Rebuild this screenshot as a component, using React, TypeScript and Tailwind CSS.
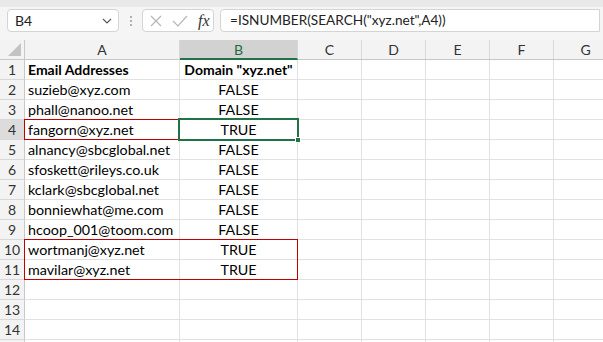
import React from "react";

const cols = ["A", "B", "C", "D", "E", "F", "G"];
const colW = [155, 118, 64, 64, 64, 64, 64];
const rows: [string, string][] = [
  ["Email Addresses", 'Domain "xyz.net"'],
  ["suzieb@xyz.com", "FALSE"],
  ["phall@nanoo.net", "FALSE"],
  ["fangorn@xyz.net", "TRUE"],
  ["alnancy@sbcglobal.net", "FALSE"],
  ["sfoskett@rileys.co.uk", "FALSE"],
  ["kclark@sbcglobal.net", "FALSE"],
  ["bonniewhat@me.com", "FALSE"],
  ["hcoop_001@toom.com", "FALSE"],
  ["wortmanj@xyz.net", "TRUE"],
  ["mavilar@xyz.net", "TRUE"],
  ["", ""],
  ["", ""],
  ["", ""],
  ["", ""],
];

export default function App() {
  const font = { fontFamily: "Lato, 'Open Sans', sans-serif" };
  return (
    <div className="w-[603px] h-[342px] overflow-hidden bg-white relative" style={font}>
      {/* formula bar */}
      <div className="h-[40px] bg-[#f5f5f5] border-t-[7px] border-[#e9e9e9] flex items-start pt-[2px]">
        <div className="ml-[7px] w-[112px] h-[23px] bg-white border border-[#d4d4d4] rounded-[4px] flex items-center justify-between pl-[7px] pr-[6px]">
          <span className="text-[14px] text-[#222]">B4</span>
          <svg width="10" height="6" viewBox="0 0 10 6" className="mt-[1px]">
            <path d="M1 1 L5 5 L9 1" fill="none" stroke="#555" strokeWidth="1.1" />
          </svg>
        </div>
        <div className="w-[23px] h-[23px] flex flex-col items-center justify-center gap-[2px]">
          <span className="w-[2px] h-[2px] bg-[#999] rounded-full"></span>
          <span className="w-[2px] h-[2px] bg-[#999] rounded-full"></span>
          <span className="w-[2px] h-[2px] bg-[#999] rounded-full"></span>
        </div>
        <div className="w-[72px] h-[23px] bg-white border border-[#d4d4d4] rounded-[4px] flex items-center pl-[6px]">
          <svg width="14" height="14" viewBox="0 0 14 14">
            <path d="M2 2 L12 12 M12 2 L2 12" stroke="#b5b5b5" strokeWidth="1.2" />
          </svg>
          <svg width="16" height="14" viewBox="0 0 16 14" className="ml-[9px]">
            <path d="M1 7 L6 12 L15 2" fill="none" stroke="#b5b5b5" strokeWidth="1.2" />
          </svg>
          <span
            className="ml-[10px] text-[16px] italic text-[#333]"
            style={{ fontFamily: "'Liberation Serif', serif" }}
          >
            fx
          </span>
        </div>
        <div className="ml-[6px] w-[380px] h-[23px] bg-white border border-[#d4d4d4] rounded-l-[4px] flex items-center pl-[9px]">
          <span className="text-[13.6px] text-[#222]">=ISNUMBER(SEARCH("xyz.net",A4))</span>
        </div>
      </div>

      {/* grid */}
      <div className="relative">
        <div className="flex h-[20px] bg-[#f3f3f3] border-b border-[#c8c8c8]">
          <div className="w-[25px] shrink-0 border-r border-[#c8c8c8] relative">
            <svg width="13" height="13" viewBox="0 0 13 13" className="absolute right-[3px] bottom-[3px]">
              <path d="M13 0 L13 13 L0 13 Z" fill="#c3c3c3" />
            </svg>
          </div>
          {cols.map((c, i) => (
            <div
              key={c}
              style={{ width: colW[i] }}
              className={
                "shrink-0 border-r border-[#d8d8d8] flex items-center justify-center text-[14px] " +
                (c === "B"
                  ? "bg-[#d2d2d2] text-[#1e6b3f] border-b-2 border-b-[#217346] -mb-[1px]"
                  : "text-[#333]")
              }
            >
              {c}
            </div>
          ))}
        </div>
        {rows.map((r, ri) => (
          <div key={ri} className="flex h-[20px] border-b border-[#e1e1e1]">
            <div
              className={
                "w-[25px] shrink-0 border-r border-[#c8c8c8] flex items-center justify-center text-[14px] -mb-[1px] border-b border-b-[#d8d8d8] " +
                (ri === 3 ? "bg-[#dcdcdc] text-[#333]" : "bg-[#f3f3f3] text-[#333]")
              }
            >
              {ri < 14 ? ri + 1 : ""}
            </div>
            {cols.map((c, i) => (
              <div
                key={c}
                style={{ width: colW[i] }}
                className={
                  "shrink-0 border-r border-[#e1e1e1] flex items-center text-[14.3px] text-black whitespace-nowrap " +
                  (i === 1 ? "justify-center " : "pl-[3px] ") +
                  (ri === 0 ? "font-bold text-[14px]" : "")
                }
              >
                {i === 0 ? r[0] : i === 1 ? r[1] : ""}
              </div>
            ))}
          </div>
        ))}

        {/* red outlines */}
        <div className="absolute left-[24px] top-[79px] w-[156px] h-[21px] border border-[#c00000]"></div>
        <div className="absolute left-[24px] top-[199px] w-[274px] h-[41px] border border-[#c00000]"></div>

        {/* selection */}
        <div className="absolute left-[178px] top-[78px] w-[121px] h-[23px] border-2 border-[#217346]"></div>
        <div className="absolute left-[295px] top-[97px] w-[6px] h-[6px] bg-[#217346] border border-white"></div>
      </div>
    </div>
  );
}
